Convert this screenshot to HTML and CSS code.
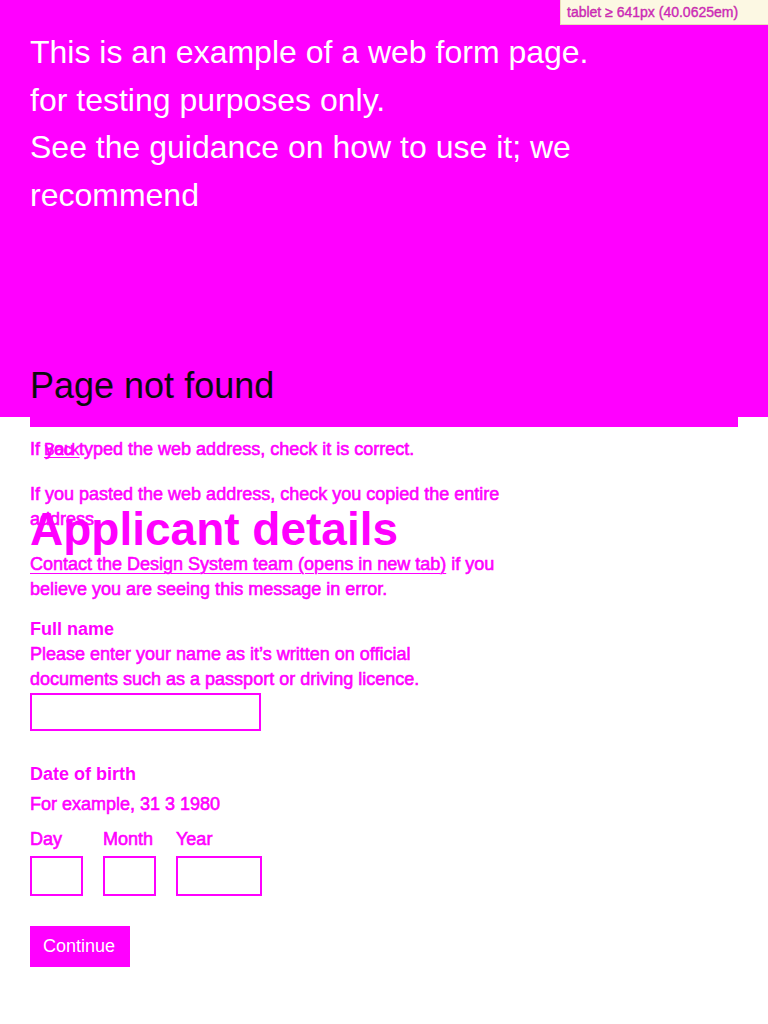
FILE: index.html
```html
<!DOCTYPE html>
<html lang="en">
<head>
<meta charset="utf-8">
<title>Page not found</title>
<link rel="stylesheet" href="styles.css">
</head>
<body>
  <div class="mq-badge">tablet ≥ 641px (40.0625em)</div>

  <header class="banner">
    <p class="banner-text">
      <span class="banner-line">This is an example of a web form page.</span>
      <span class="banner-line">for testing purposes only.</span>
      <span class="banner-line">See the guidance on how to use it; we</span>
      <span class="banner-line">recommend</span>
    </p>
    <h1 class="page-title">Page not found</h1>
  </header>
  <div class="banner-tail"></div>

  <main class="notfound">
    <p class="body-text">If you typed the web address, check it is correct.</p>
    <p class="body-text">If you pasted the web address, check you copied the entire address.</p>
    <p class="body-text"><a class="link" href="#">Contact the Design System team (opens in new tab)</a> if you believe you are seeing this message in error.</p>
  </main>

  <form class="form-layer" action="#">
    <a class="back-link" href="#">Back</a>
    <h2 class="form-title">Applicant details</h2>

    <div class="field">
      <label class="field-label" for="full-name">Full name</label>
      <div class="hint">Please enter your name as it’s written on official documents such as a passport or driving licence.</div>
      <input class="text-input" id="full-name" type="text">
    </div>

    <div class="field dob">
      <div class="field-label">Date of birth</div>
      <div class="hint dob-hint">For example, 31 3 1980</div>
      <div class="date-row">
        <div class="date-item">
          <label class="date-label" for="dob-day">Day</label>
          <input class="date-input date-input-short" id="dob-day" type="text">
        </div>
        <div class="date-item">
          <label class="date-label" for="dob-month">Month</label>
          <input class="date-input date-input-short" id="dob-month" type="text">
        </div>
        <div class="date-item">
          <label class="date-label" for="dob-year">Year</label>
          <input class="date-input date-input-long" id="dob-year" type="text">
        </div>
      </div>
    </div>

    <button class="button" type="button">Continue</button>
  </form>
</body>
</html>
```

FILE: styles.css
```css
html, body {
  margin: 0;
  padding: 0;
  background: #ffffff;
}

body {
  position: relative;
  font-family: "Liberation Sans", Arial, sans-serif;
  color: #ff00ff;
  min-height: 1024px;
}

.mq-badge {
  position: absolute;
  top: 0;
  right: 0;
  z-index: 5;
  box-sizing: border-box;
  width: 208px;
  height: 25px;
  padding: 0 4px 0 6px;
  background: #fcf8e3;
  border-bottom: 1px solid #eadfb8;
  border-left: 1px solid #eadfb8;
  color: #d81ad0;
  font-size: 14px;
  line-height: 24px;
  white-space: nowrap;
  -webkit-text-stroke: 0.4px #c0389a;
}

.banner {
  box-sizing: border-box;
  height: 417px;
  padding: 29px 30px 11px;
  background: #ff00ff;
  display: flex;
  flex-direction: column;
  justify-content: space-between;
}

.banner-text {
  margin: 0;
  color: #ffffff;
  font-size: 32px;
  line-height: 47.5px;
}

.banner-line {
  display: block;
  white-space: nowrap;
}

.page-title {
  margin: 0;
  color: #0b0c0c;
  font-size: 36px;
  line-height: 40px;
  font-weight: 400;
}

.banner-tail {
  height: 10px;
  margin: 0 30px;
  background: #ff00ff;
}

.notfound {
  width: 480px;
  padding: 10px 30px 0;
}

.body-text {
  margin: 0 0 20px;
  font-size: 18px;
  line-height: 25px;
  color: #ff00ff;
  -webkit-text-stroke: 0.6px #ff00ff;
}

.link {
  color: #ff00ff;
  text-decoration: underline;
  text-decoration-thickness: 1px;
  text-underline-offset: 3px;
}

.form-layer {
  position: absolute;
  top: 440px;
  left: 30px;
  width: 440px;
  margin: 0;
  color: #ff00ff;
}

.back-link {
  display: inline-block;
  padding-left: 14px;
  font-size: 16px;
  line-height: 20px;
  color: #ff00ff;
  text-decoration: underline;
  text-underline-offset: 2px;
  -webkit-text-stroke: 0.4px #ff00ff;
}

.form-title {
  margin: 44px 0 0;
  font-size: 46px;
  line-height: 50px;
  font-weight: 700;
  color: #ff00ff;
}

.field {
  margin-top: 63px;
}

.field-label {
  display: block;
  font-size: 18px;
  line-height: 25px;
  font-weight: 700;
}

.hint {
  font-size: 18px;
  line-height: 25px;
  -webkit-text-stroke: 0.6px #ff00ff;
}

.text-input {
  display: block;
  box-sizing: border-box;
  width: 231px;
  height: 38px;
  margin: 1px 0 0;
  border: 2px solid #ff00ff;
  border-radius: 0;
  background: #ffffff;
  padding: 5px;
  font: inherit;
}

.dob {
  margin-top: 31px;
}

.dob-hint {
  margin-top: 5px;
}

.date-row {
  display: flex;
  gap: 20px;
  margin-top: 10px;
}

.date-item {
  display: flex;
  flex-direction: column;
}

.date-label {
  font-size: 18px;
  line-height: 25px;
  -webkit-text-stroke: 0.6px #ff00ff;
}

.date-input {
  box-sizing: border-box;
  height: 40px;
  margin: 4px 0 0;
  border: 2px solid #ff00ff;
  border-radius: 0;
  background: #ffffff;
  padding: 5px;
  font: inherit;
}

.date-input-short {
  width: 53px;
}

.date-input-long {
  width: 86px;
}

.button {
  display: block;
  box-sizing: border-box;
  width: 100px;
  margin-top: 30px;
  padding: 8px 13px;
  border: 0;
  border-radius: 0;
  background: #ff00ff;
  color: #ffffff;
  font-family: "Liberation Sans", Arial, sans-serif;
  font-size: 18px;
  line-height: 25px;
  text-align: left;
}
```
